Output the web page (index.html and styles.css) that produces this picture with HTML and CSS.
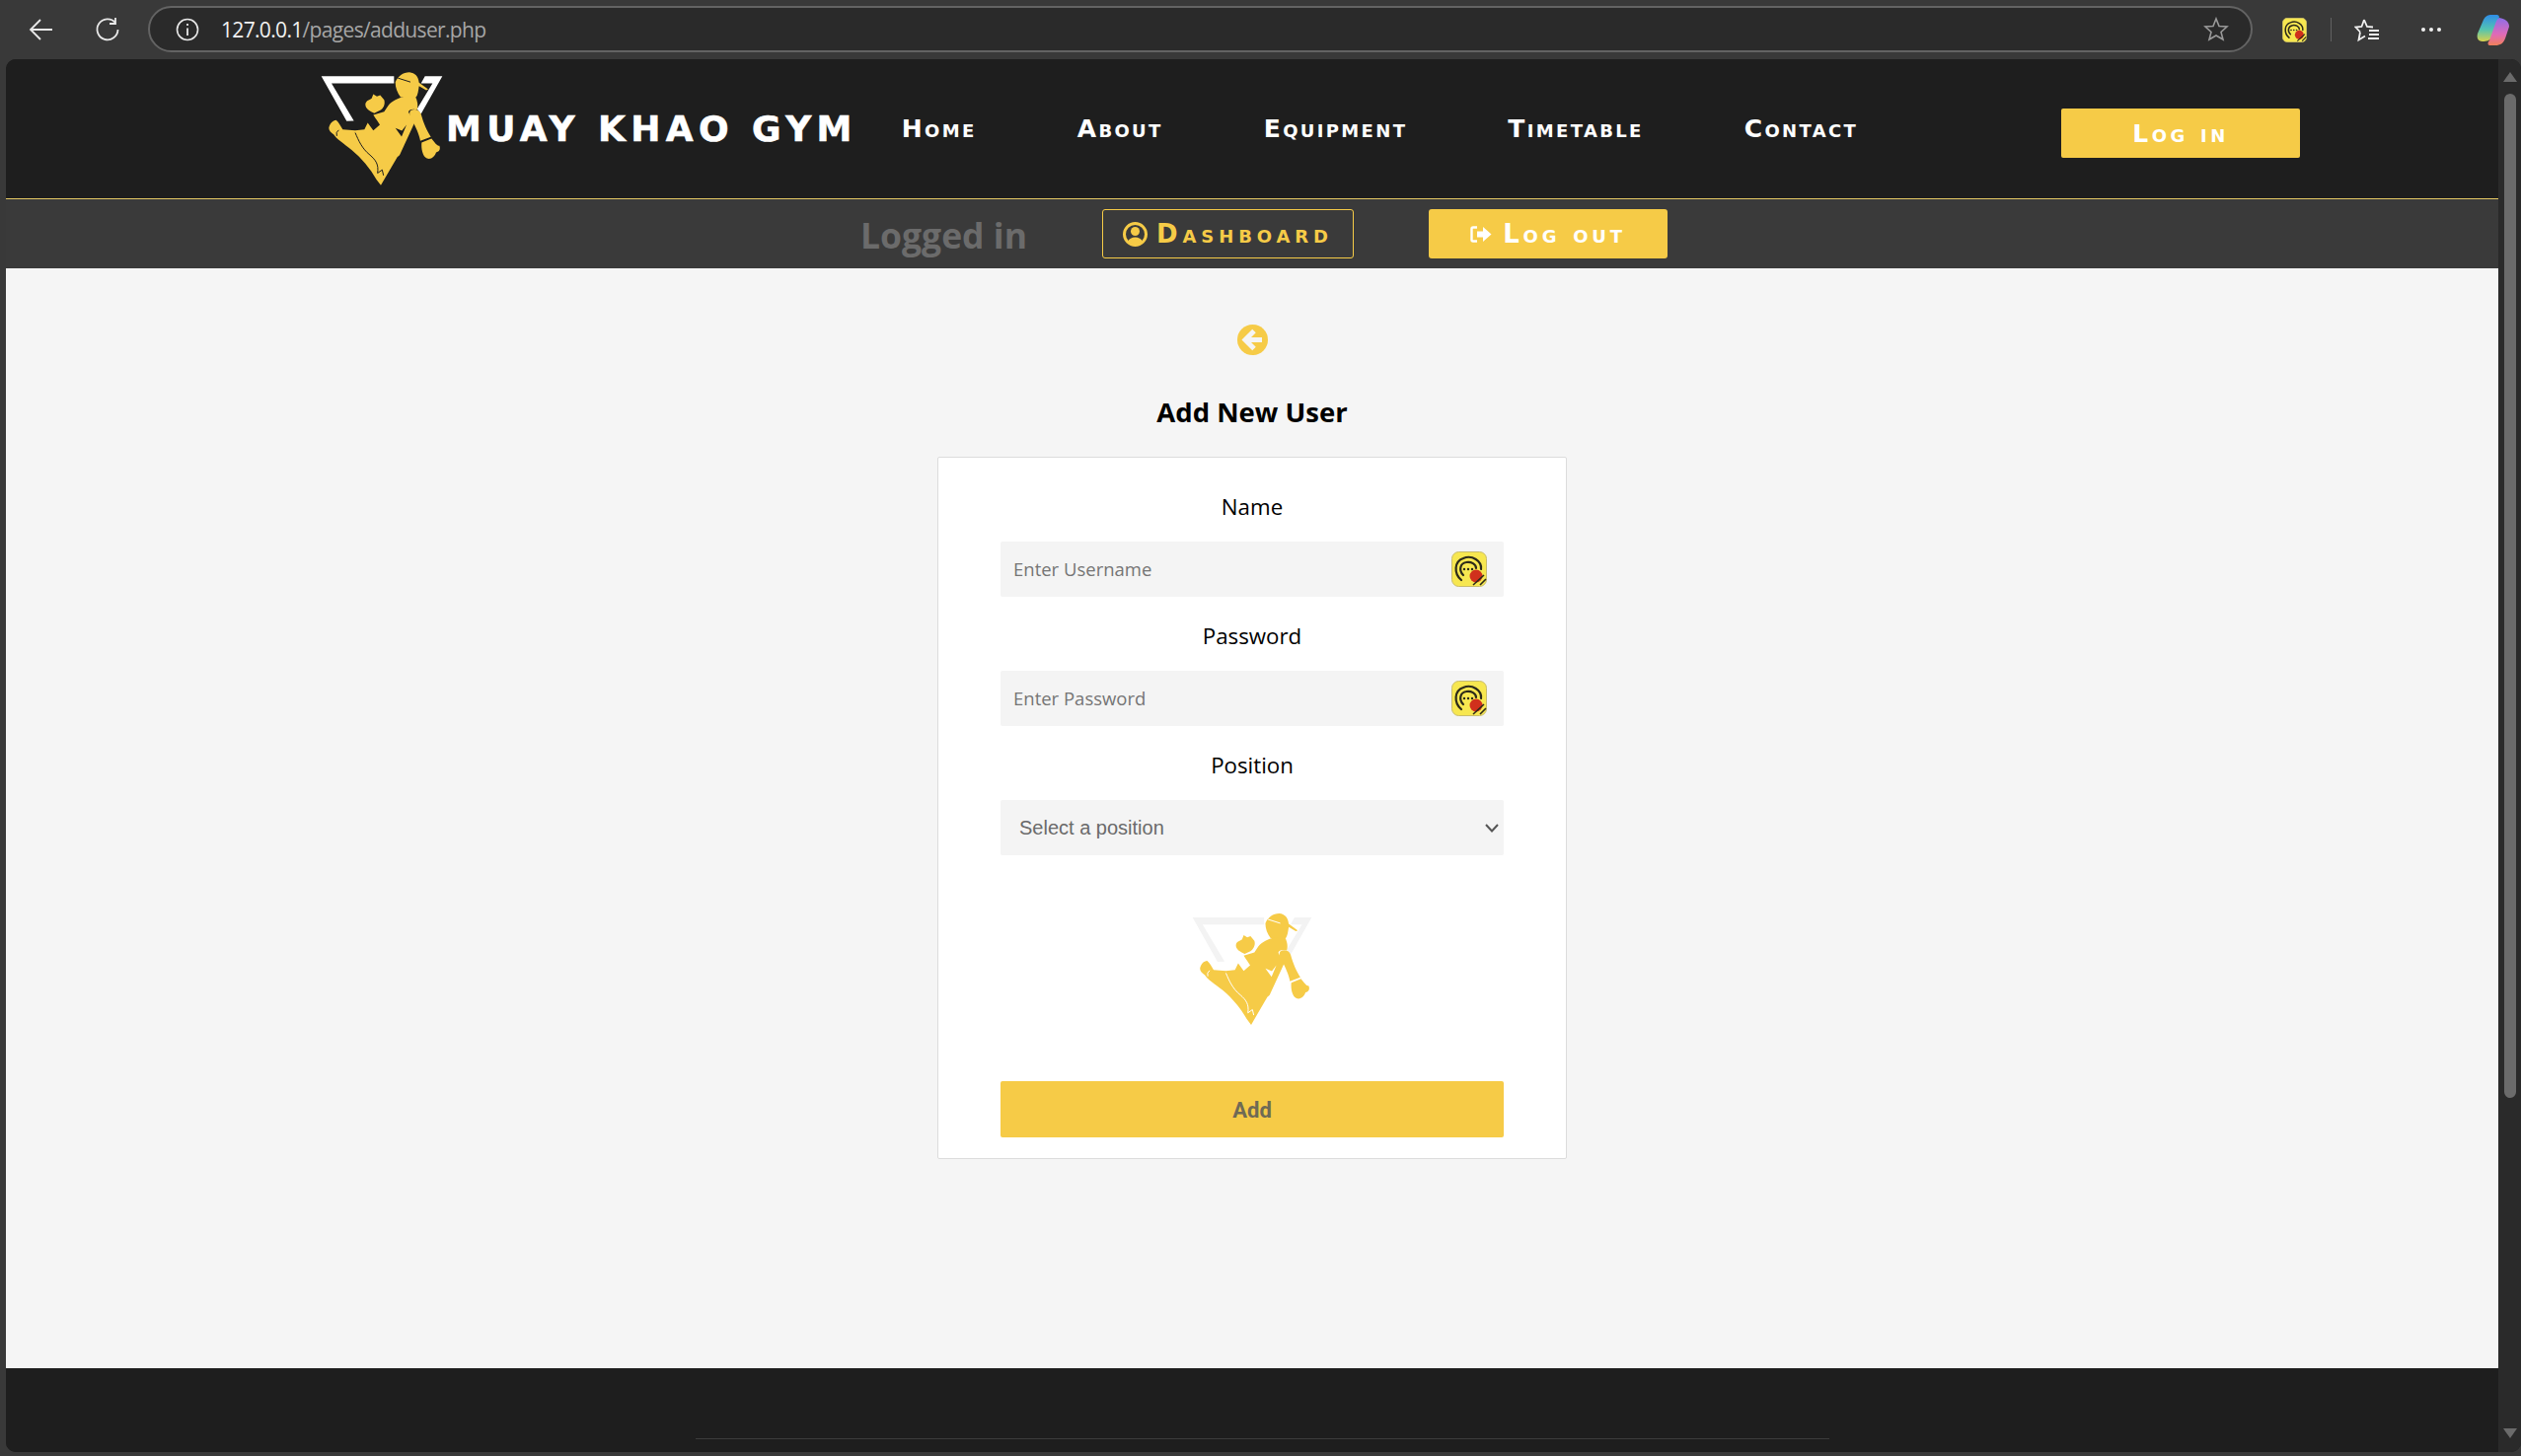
FILE: index.html
```html
<!DOCTYPE html>
<html>
<head>
	<title>Add New User</title>
	<link rel="stylesheet" href="styles.css">
</head>
<body>
	<svg class="defs" width="0" height="0">
		<symbol id="gym-logo" viewBox="45 35 375 350">
			<path class="logo-frame" d="M47 50 L268 50 L268 72 L78 72 L146 186 L124 187 Z M362 50 L415 50 L350 165 L338 150 L385 72 L350 72 Z"/>
			<path class="logo-body" d="M272 68 C280 50 295 38 315 38 C332 40 342 50 344 70 L372 90 L366 93 L344 80 C342 95 340 108 335 114 L288 114 C278 100 272 85 272 68 Z"/>
			<path class="logo-body" d="M181 135 C183 124 195 122 200 118 L205 105 L216 112 L226 108 L238 122 C242 135 236 148 226 154 L208 163 C196 157 180 150 181 135 Z"/>
			<path class="logo-body" d="M70 208 C72 195 82 184 92 184 C100 190 104 200 112 212 L150 215 L178 212 L188 192 L205 215 L225 198 C215 182 207 172 205 168 L238 158 L250 140 C262 125 280 118 300 112 L332 110 C340 125 342 140 338 152 C325 148 312 152 312 160 C318 172 325 178 332 188 L285 290 L278 296 L228 382 L215 365 C195 330 170 300 140 275 C115 255 92 240 85 228 C75 222 70 215 70 208 Z"/>
			<path class="logo-body" d="M318 155 C330 148 345 152 350 165 C358 195 368 215 380 235 L348 247 C345 230 335 205 318 175 C315 168 314 160 318 155 Z"/>
			<path class="logo-body" d="M352 252 L382 240 C392 252 398 262 406 262 C410 272 406 280 396 282 C392 295 380 305 368 300 C355 295 350 270 352 252 Z"/>
			<path class="logo-cut" d="M272 208 L291 234 L306 198 L292 216 Z"/>
			<path class="logo-line" d="M100 214 Q90 220 94 232 M150 222 C160 245 170 270 195 290 C212 305 222 318 218 345 L232 335 L236 352 M280 56 L318 68"/>
		</symbol>
		<symbol id="ext-icon" viewBox="0 0 36 36">
			<rect x="0.5" y="0.5" width="35" height="35" rx="7" fill="#f7e750" stroke="#c9bd6c"/>
			<g fill="none" stroke="#2c2a1a" stroke-width="2.2" stroke-linecap="round">
				<path d="M10 29 C2 22 3 10 12 7 C21 3 31 10 30 18"/>
				<path d="M12 24 C7 19 9 12 15 11 C20 10 25 13 25 17"/>
			</g>
			<circle cx="13" cy="18" r="1.2" fill="#2c2a1a"/>
			<circle cx="17" cy="18" r="1.2" fill="#2c2a1a"/>
			<circle cx="21" cy="18" r="1.2" fill="#2c2a1a"/>
			<circle cx="25" cy="25" r="6.5" fill="#d0301c"/>
			<path d="M22 34 L33 24 M29 34 L35 28" fill="none" stroke="#2c2a1a" stroke-width="1.6"/>
		</symbol>
	</svg>

	<div class="browser">
		<div class="toolbar">
			<svg class="tool-back" width="26" height="24" viewBox="0 0 26 24"><path d="M24 12 H2 M12 2 L2 12 L12 22" fill="none" stroke="#e8e8e8" stroke-width="1.8"/></svg>
			<svg class="tool-reload" width="26" height="26" viewBox="0 0 26 26"><path d="M21 6 A10.5 10.5 0 1 0 23.5 13 M21 1 V7 H15" fill="none" stroke="#e8e8e8" stroke-width="1.8"/></svg>
			<div class="address">
				<svg width="24" height="24" viewBox="0 0 24 24"><circle cx="12" cy="12" r="10.5" fill="none" stroke="#e8e8e8" stroke-width="1.6"/><path d="M12 10.5 V18 M12 6 V8" stroke="#e8e8e8" stroke-width="1.8"/></svg>
				<span class="url"><span class="url-host">127.0.0.1</span>/pages/adduser.php</span>
				<svg class="address-star" width="26" height="25" viewBox="0 0 26 25"><path d="M13 2 L16 9.5 L24 10 L18 15.5 L20 23 L13 19 L6 23 L8 15.5 L2 10 L10 9.5 Z" fill="none" stroke="#9a9a9a" stroke-width="1.6"/></svg>
			</div>
			<svg class="tool-ext" width="25" height="25"><use href="#ext-icon"/></svg>
			<div class="tool-sep"></div>
			<svg class="tool-fav" width="26" height="25" viewBox="0 0 26 25"><path d="M10 2 L13 9 L19 9.5 M6 14.5 L1.5 9.5 L7.5 9 L10 2 M6 14.5 L4.5 22.5 L11 18.5" fill="none" stroke="#f0f0f0" stroke-width="1.8"/><path d="M15 13 H25 M15 17 H25 M14 21 H25" stroke="#f0f0f0" stroke-width="1.8"/></svg>
			<div class="tool-dots"><i></i><i></i><i></i></div>
			<svg class="tool-copilot" width="34" height="32" viewBox="0 0 34 32">
				<defs>
					<linearGradient id="cop-left" x1="0" y1="0" x2="0" y2="1"><stop offset="0" stop-color="#2f8de8"/><stop offset="0.55" stop-color="#54c4b0"/><stop offset="1" stop-color="#d8d14c"/></linearGradient>
					<linearGradient id="cop-right" x1="0" y1="0" x2="0" y2="1"><stop offset="0" stop-color="#8d6ee8"/><stop offset="0.6" stop-color="#e06ab8"/><stop offset="1" stop-color="#f0805a"/></linearGradient>
				</defs>
				<path d="M15 1 H21 C24 2 23 5 21 8 L15 24 C14 27 10 28 6 28 C1 28 0 24 1 20 L7 6 C9 2 12 1 15 1 Z" fill="url(#cop-left)"/>
				<path d="M23 4 C29 5 33 8 33 13 L29 25 C27 30 24 32 19 32 H13 C11 31 11 29 13 27 L19 10 C20 7 21 5 23 4 Z" fill="url(#cop-right)"/>
			</svg>
		</div>

		<div class="window">
			<div class="page">
				<div class="navbar">
					<svg class="brand-logo"><use href="#gym-logo"/></svg>
					<a class="brand-name" href="#">MUAY KHAO GYM</a>
					<div class="navitem">
						<a href="#">Home</a>
						<a href="#">About</a>
						<a href="#">Equipment</a>
						<a href="#">Timetable</a>
						<a href="#">Contact</a>
					</div>
					<a class="login-btn" href="#">Log in</a>
				</div>

				<div class="subbar">
					<span class="logged">Logged in</span>
					<a class="dash-btn" href="#">
						<svg width="25" height="25" viewBox="0 0 25 25"><circle cx="12.5" cy="12.5" r="11" fill="none" stroke="#f6cb47" stroke-width="3"/><circle cx="12.5" cy="9.5" r="4.5" fill="#f6cb47"/><path d="M5 20 C7 14 18 14 20 20 L12.5 24 Z" fill="#f6cb47"/></svg>
						Dashboard
					</a>
					<a class="logout-btn" href="#">
						<svg width="22" height="17" viewBox="0 0 22 17"><path d="M7 1.5 H3 Q1.5 1.5 1.5 3 V14 Q1.5 15.5 3 15.5 H7" fill="none" stroke="#fff" stroke-width="2.4"/><path d="M7 5.5 H13 V1 L21.5 8.5 L13 16 V11.5 H7 Z" fill="#fff"/></svg>
						Log out
					</a>
				</div>

				<div class="main">
					<a class="back-link" href="#">
						<svg width="31" height="31" viewBox="0 0 31 31"><circle cx="15.5" cy="15.5" r="15.5" fill="#f6cb47"/><path d="M17 6.5 L8 15.5 L17 24.5 M9 15.5 H25" fill="none" stroke="#f5f5f5" stroke-width="5"/></svg>
					</a>
					<h1 class="title">Add New User</h1>
					<form class="card">
						<label class="field-label">Name</label>
						<div class="field">
							<input type="text" placeholder="Enter Username">
							<svg class="field-ext"><use href="#ext-icon"/></svg>
						</div>
						<label class="field-label">Password</label>
						<div class="field">
							<input type="password" placeholder="Enter Password">
							<svg class="field-ext"><use href="#ext-icon"/></svg>
						</div>
						<label class="field-label">Position</label>
						<div class="field field-select">
							<select class="position">
								<option>Select a position</option>
							</select>
							<svg class="chevron" width="14" height="9" viewBox="0 0 14 9"><path d="M1 1 L7 7.5 L13 1" fill="none" stroke="#555" stroke-width="2"/></svg>
						</div>
						<svg class="form-logo"><use href="#gym-logo"/></svg>
						<button class="add-btn" type="button">Add</button>
					</form>
				</div>

				<div class="footer"><div class="footer-line"></div></div>
			</div>
			<div class="scrollbar">
				<div class="arrow-up"></div>
				<div class="thumb"></div>
				<div class="arrow-down"></div>
			</div>
		</div>
	</div>
</body>
</html>
```

FILE: styles.css
```css
*{
	margin: 0px;
	padding: 0px;
	box-sizing: border-box;
}
body{
	width: 2555px;
	height: 1476px;
	overflow: hidden;
	background-color: #393939;
	font-family: "Open Sans", sans-serif;
}
a{
	text-decoration: none;
}
.defs{
	position: absolute;
}
.browser{
	height: 1476px;
	display: flex;
	flex-direction: column;
}

/* browser chrome */
.toolbar{
	height: 60px;
	display: flex;
	align-items: center;
	background-color: #393939;
	padding-left: 29px;
}
.tool-back{
	margin-right: 41px;
}
.tool-reload{
	margin-right: 28px;
}
.address{
	width: 2133px;
	height: 47px;
	margin-top: -1px;
	display: flex;
	align-items: center;
	padding: 0px 22px 0px 26px;
	border: 2px solid #636363;
	border-radius: 24px;
	background-color: #2a2a2a;
}
.url{
	margin-left: 22px;
	font-size: 21px;
	letter-spacing: -0.67px;
	color: #a6a6a6;
}
.url-host{
	color: #f2f2f2;
}
.address-star{
	margin-left: auto;
}
.tool-ext{
	margin-left: 30px;
}
.tool-sep{
	width: 1px;
	height: 24px;
	margin-left: 24px;
	background-color: #626262;
}
.tool-fav{
	margin-left: 23px;
}
.tool-dots{
	display: flex;
	gap: 4px;
	margin-left: 42px;
}
.tool-dots i{
	width: 4px;
	height: 4px;
	border-radius: 50%;
	background-color: #f0f0f0;
}
.tool-copilot{
	margin-left: 36px;
}

/* page */
.window{
	flex: 1;
	display: flex;
	margin: 0px 0px 4px 6px;
	border-radius: 10px;
	overflow: hidden;
	background-color: #1e1e1e;
}
.page{
	width: 2526px;
	display: flex;
	flex-direction: column;
}
.navbar{
	height: 142px;
	display: flex;
	align-items: center;
	padding: 0px 201px 0px 319px;
	border-bottom: 1px solid #e6c964;
	background-color: #1e1e1e;
}
.brand-logo{
	width: 125px;
	height: 117px;
}
.brand-name{
	margin-left: 2px;
	font-family: "DejaVu Sans", sans-serif;
	font-weight: bold;
	font-size: 36px;
	letter-spacing: 5.4px;
	-webkit-text-stroke: 0.6px #fff;
	color: #fff;
	white-space: nowrap;
}
.navitem{
	display: flex;
	gap: 102px;
	margin-left: 45px;
}
.navitem a{
	font-family: "DejaVu Sans", sans-serif;
	font-weight: bold;
	font-variant: small-caps;
	font-size: 25px;
	letter-spacing: 2.35px;
	color: #fff;
}
.login-btn{
	width: 242px;
	height: 50px;
	margin: 8px 0px 0px auto;
	padding-top: 2px;
	display: flex;
	align-items: center;
	justify-content: center;
	border-radius: 2px;
	background-color: #f6cb47;
	font-family: "DejaVu Sans", sans-serif;
	font-weight: bold;
	font-variant: small-caps;
	font-size: 25px;
	letter-spacing: 3.5px;
	color: #fff;
}
.subbar{
	height: 70px;
	display: flex;
	align-items: center;
	gap: 76px;
	padding-left: 866px;
	background-color: #3a3a3a;
}
.logged{
	padding-top: 2px;
	font-weight: bold;
	font-size: 35.5px;
	color: #6b6b6b;
}
.dash-btn, .logout-btn{
	height: 50px;
	display: flex;
	align-items: center;
	justify-content: center;
	border-radius: 3px;
	font-family: "DejaVu Sans", sans-serif;
	font-weight: bold;
	font-variant: small-caps;
	font-size: 26px;
}
.dash-btn{
	width: 255px;
	gap: 9px;
	border: 1px solid #f6cb47;
	letter-spacing: 4.9px;
	color: #f6cb47;
}
.logout-btn{
	width: 242px;
	gap: 11px;
	background-color: #f6cb47;
	letter-spacing: 3.8px;
	color: #fff;
}
.main{
	height: 1115px;
	display: flex;
	flex-direction: column;
	align-items: center;
	padding-top: 57px;
	background-color: #f5f5f5;
}
.back-link{
	height: 31px;
}
.title{
	margin-top: 38px;
	font-size: 27.5px;
	line-height: 40px;
	color: #000;
}
.card{
	width: 638px;
	height: 712px;
	margin-top: 25px;
	padding: 34px 63px 0px 63px;
	border: 1px solid #dcdcdc;
	border-radius: 2px;
	background-color: #fff;
	display: flex;
	flex-direction: column;
}
.field-label{
	height: 32px;
	line-height: 31px;
	margin-bottom: 19px;
	text-align: center;
	font-size: 22.3px;
	color: #000;
}
.field{
	position: relative;
	height: 56px;
	margin-bottom: 24px;
}
.field-select{
	margin-bottom: 0px;
}
.field input{
	width: 100%;
	height: 56px;
	padding: 0px 0px 2px 13px;
	border: none;
	border-radius: 2px;
	background-color: #f4f4f4;
	font-family: "Open Sans", sans-serif;
	font-size: 18.5px;
}
.field input::placeholder{
	color: #757575;
}
.field-ext{
	position: absolute;
	top: 10px;
	right: 17px;
	width: 36px;
	height: 36px;
}
.position{
	width: 100%;
	height: 56px;
	padding-left: 19px;
	border: none;
	border-radius: 2px;
	appearance: none;
	background-color: #f4f4f4;
	font-family: "Liberation Sans", sans-serif;
	font-size: 20px;
	color: #6a6a6a;
}
.chevron{
	position: absolute;
	top: 24px;
	right: 5px;
}
.form-logo{
	align-self: center;
	width: 123px;
	height: 115px;
	margin-top: 58px;
	--frame: #f3f3f3;
	--cut: #fff;
}
.add-btn{
	height: 57px;
	margin-top: 56px;
	padding-top: 2px;
	border: none;
	border-radius: 2px;
	background-color: #f6cb47;
	font-family: "Roboto", sans-serif;
	font-weight: bold;
	font-size: 22px;
	color: #6f6a55;
}
.logo-frame{
	fill: var(--frame, #fff);
}
.logo-body{
	fill: #f6cb47;
}
.logo-cut{
	fill: var(--cut, #1e1e1e);
}
.logo-line{
	fill: none;
	stroke: var(--cut, #1e1e1e);
	stroke-width: 3;
}
.footer{
	flex: 1;
	padding-top: 71px;
	background-color: #1e1e1e;
}
.footer-line{
	width: 1149px;
	height: 1px;
	margin-left: 699px;
	background-color: #3c3c3c;
}

/* scrollbar */
.scrollbar{
	flex: 1;
	display: flex;
	flex-direction: column;
	align-items: center;
	background-color: #2a2a2a;
	padding-top: 13px;
}
.arrow-up, .arrow-down{
	width: 0px;
	height: 0px;
	border-left: 7px solid transparent;
	border-right: 7px solid transparent;
}
.arrow-up{
	border-bottom: 10px solid #6b6b6b;
}
.arrow-down{
	margin-top: auto;
	margin-bottom: 14px;
	border-top: 10px solid #6b6b6b;
}
.thumb{
	width: 12px;
	height: 1018px;
	margin-top: 12px;
	border-radius: 6px;
	background-color: #6b6b6b;
}
```
